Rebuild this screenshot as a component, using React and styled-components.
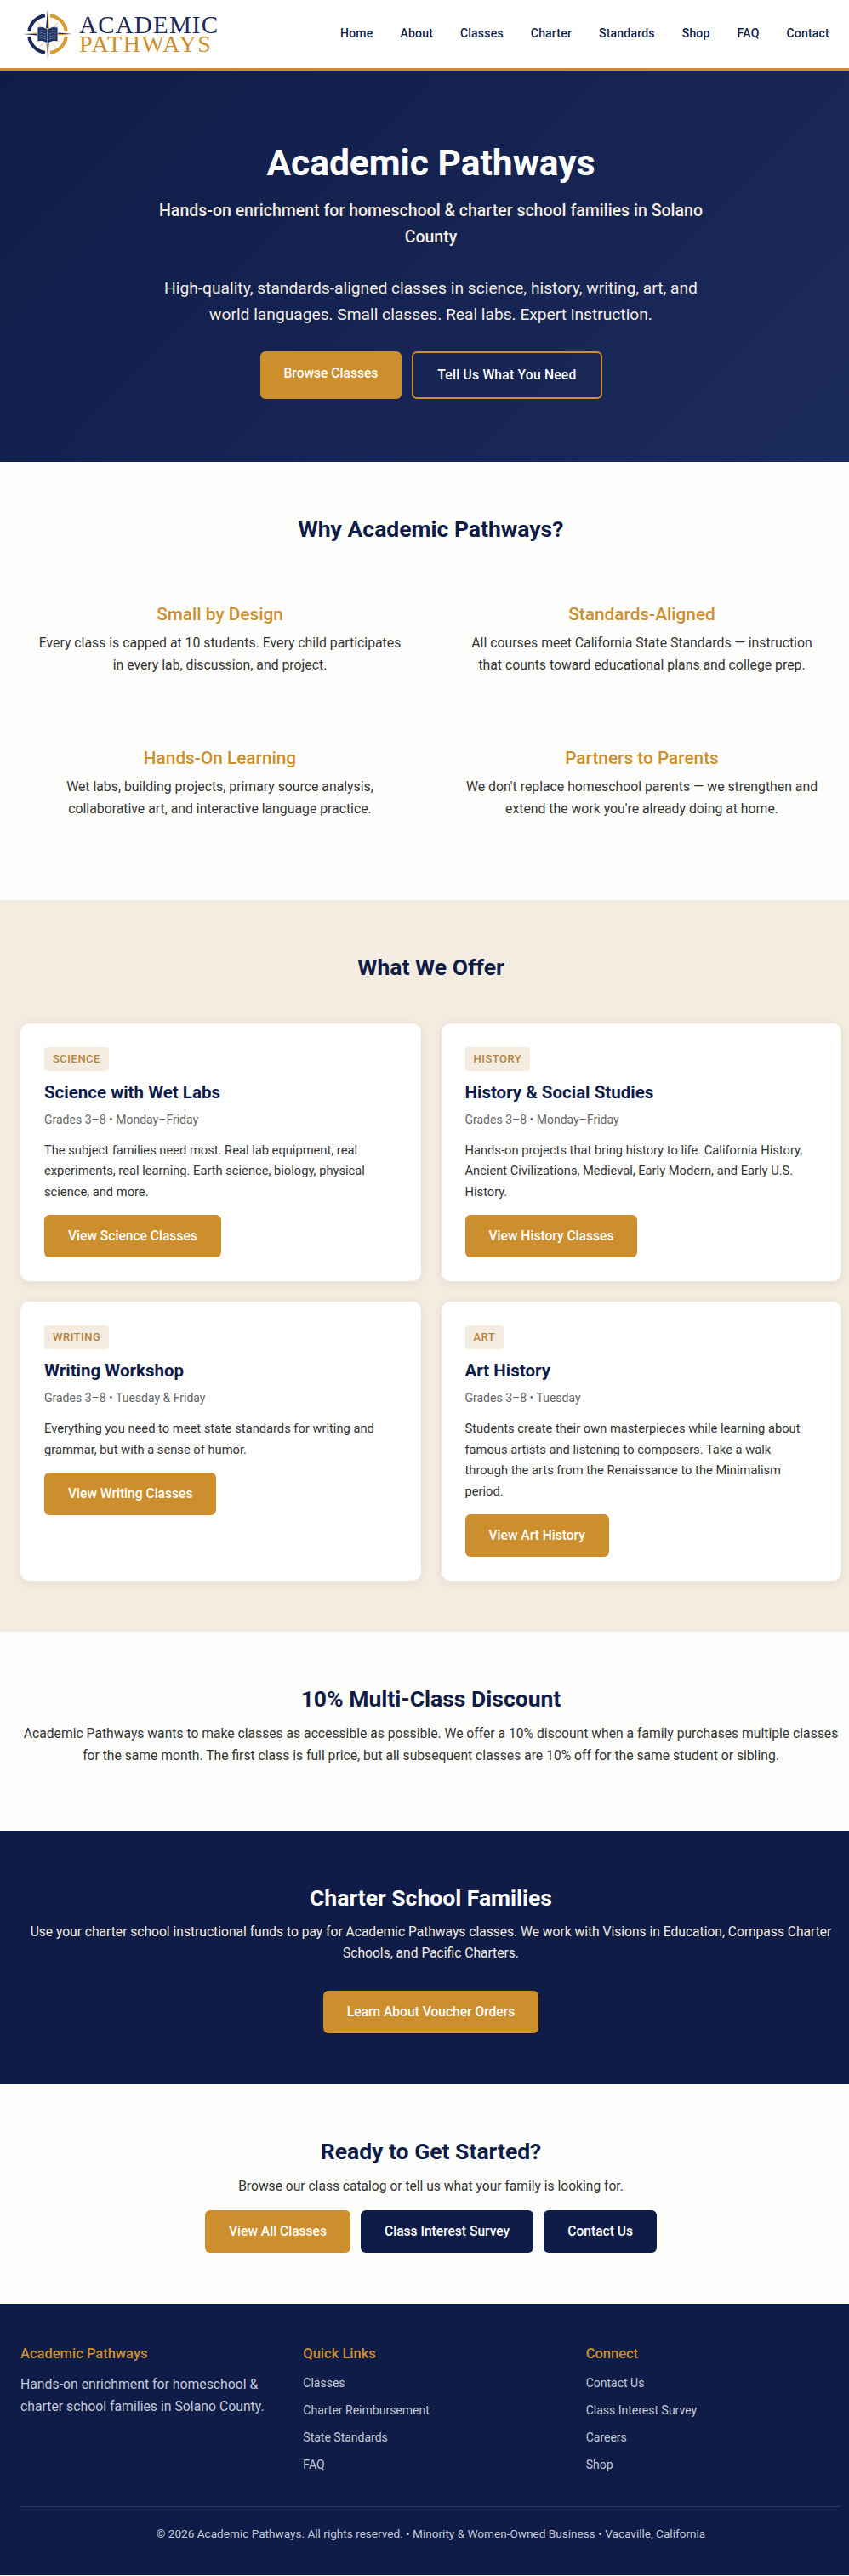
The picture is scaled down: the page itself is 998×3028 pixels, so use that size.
import styled, { createGlobalStyle } from "styled-components";

const navy = "#0f1c47";
const gold = "#cd8f2d";
const cream = "#f4ece0";
const paper = "#fefefc";

const GlobalStyle = createGlobalStyle`
  * {
    box-sizing: border-box;
  }
  html,
  body {
    margin: 0;
    overflow-x: hidden;
  }
  body {
    font-family: Roboto, "Open Sans", Arial, sans-serif;
    font-size: 15.2px;
    line-height: 1.7;
    color: #333;
    background: ${paper};
  }
  h1, h2, h3, h4, p, ul {
    margin: 0;
    padding: 0;
  }
  a {
    text-decoration: none;
    color: inherit;
  }
`;

const Page = styled.div`
  width: 1013px;
`;

const Header = styled.header`
  height: 83px;
  background: #fff;
  border-bottom: 3px solid ${gold};
  padding: 0 24px;
  display: flex;
  align-items: center;
  justify-content: space-between;
`;

const Logo = styled.a`
  display: flex;
  align-items: center;
  gap: 8px;
  margin-left: 3px;
`;

const LogoText = styled.div`
  display: flex;
  flex-direction: column;
  font-family: "Liberation Serif", "Times New Roman", serif;
`;

const LogoLine = styled.span`
  display: block;
  white-space: nowrap;
  font-size: ${({ $gold }) => ($gold ? "28px" : "29px")};
  letter-spacing: ${({ $gold }) => ($gold ? "1.5px" : "1.2px")};
  line-height: ${({ $gold }) => ($gold ? "22px" : "24px")};
  color: ${({ $gold }) => ($gold ? gold : "#1b2a5a")};
`;

const Nav = styled.nav`
  display: flex;
  gap: 4px;
`;

const NavLink = styled.a`
  padding: 6px 14px;
  font-size: 14px;
  font-weight: 500;
  letter-spacing: 0.2px;
  color: ${navy};
`;

const Hero = styled.section`
  background: linear-gradient(135deg, #0f1c47 0%, #1b2b5c 100%);
  padding: 80px 24px 74px;
  text-align: center;
  color: #fff;
`;

const HeroTitle = styled.h1`
  font-size: 42.5px;
  font-weight: 700;
  line-height: 58px;
  margin-bottom: 12px;
`;

const HeroSub = styled.p`
  max-width: 650px;
  margin: 0 auto 30px;
  font-size: 19.5px;
  line-height: 30.6px;
  font-weight: 500;
  color: ${cream};
`;

const HeroText = styled.p`
  max-width: 650px;
  margin: 0 auto 28px;
  font-size: 19.2px;
  line-height: 30.6px;
  color: ${cream};
`;

const ButtonRow = styled.div`
  display: flex;
  justify-content: center;
  gap: 12px;
`;

const Button = styled.a`
  display: inline-block;
  padding: ${({ $big }) => ($big ? "12.8px 28px" : "12px 28px")};
  font-size: 15.6px;
  line-height: 26px;
  font-weight: 500;
  letter-spacing: ${({ $variant }) => ($variant === "outline" ? "0.25px" : "0")};
  color: #fff;
  border-radius: 6px;
  background: ${({ $variant }) =>
    $variant === "navy" ? navy : $variant === "outline" ? "transparent" : gold};
  border: ${({ $variant }) => ($variant === "outline" ? `2px solid ${gold}` : "none")};
`;

const Section = styled.section`
  padding: 60px 24px;
  text-align: ${({ $left }) => ($left ? "left" : "center")};
  background: ${({ $bg }) => $bg || paper};
  color: ${({ $light }) => ($light ? cream : "#333")};
`;

const SectionTitle = styled.h2`
  font-size: 26.5px;
  font-weight: 700;
  line-height: 37px;
  text-align: center;
  color: ${({ $light }) => ($light ? "#fff" : navy)};
  margin-bottom: ${({ $gap }) => $gap || 10}px;
`;

const FeatureGrid = styled.div`
  display: grid;
  grid-template-columns: 1fr 1fr;
  column-gap: 27px;
  row-gap: 18px;
`;

const Feature = styled.div`
  padding: 31px 12px 34px;
  text-align: center;
`;

const FeatureTitle = styled.h3`
  font-size: 20.8px;
  font-weight: 500;
  line-height: 27px;
  color: ${gold};
  margin-bottom: 7px;
`;

const FeatureText = styled.p`
  font-size: 15.8px;
  line-height: 26px;
`;

const CardGrid = styled.div`
  display: grid;
  grid-template-columns: 1fr 1fr;
  gap: 24px;
`;

const Card = styled.article`
  background: #fff;
  border-radius: 10px;
  padding: 28px;
  box-shadow: 0 2px 12px rgba(15, 28, 71, 0.08);
`;

const Tag = styled.span`
  display: block;
  width: fit-content;
  padding: 3px 10px;
  margin-bottom: 12px;
  font-size: 13px;
  line-height: 22px;
  font-weight: 500;
  letter-spacing: 0.5px;
  text-transform: uppercase;
  color: #b5833a;
  background: ${cream};
  border-radius: 4px;
`;

const CardTitle = styled.h3`
  font-size: 20.5px;
  font-weight: 700;
  line-height: 27px;
  color: ${navy};
  margin-bottom: 7px;
`;

const CardMeta = styled.p`
  font-size: 14px;
  line-height: 23px;
  color: #666;
  margin-bottom: 12px;
`;

const CardText = styled.p`
  font-size: 14.7px;
  line-height: 24.5px;
  padding-right: 8px;
  margin-bottom: 15px;
`;

const Lead = styled.p`
  font-size: ${({ $size }) => $size || 15.7}px;
  line-height: ${({ $leading }) => $leading || 26}px;
  margin-bottom: ${({ $gap }) => $gap || 0}px;
`;

const Footer = styled.footer`
  background: ${navy};
  padding: 48px 24px 0;
  height: 319px;
`;

const FooterGrid = styled.div`
  display: grid;
  grid-template-columns: repeat(3, 1fr);
  gap: 32px;
  height: 191px;
  border-bottom: 1px solid rgba(255, 255, 255, 0.12);
`;

const FooterHeading = styled.h4`
  font-size: 16.5px;
  font-weight: 500;
  line-height: 22px;
  color: ${gold};
  margin-bottom: 12px;
`;

const FooterText = styled.p`
  font-size: 15.8px;
  line-height: 26px;
  color: #c4c9d8;
`;

const FooterList = styled.ul`
  list-style: none;
  display: flex;
  flex-direction: column;
  gap: 9px;
`;

const FooterLink = styled.a`
  display: block;
  font-size: 14px;
  line-height: 23px;
  color: #c4c9d8;
`;

const Copyright = styled.p`
  padding-top: 20px;
  text-align: center;
  font-size: 13.6px;
  color: #c4c9d8;
`;

const navItems = ["Home", "About", "Classes", "Charter", "Standards", "Shop", "FAQ", "Contact"];

const features = [
  {
    title: "Small by Design",
    text: "Every class is capped at 10 students. Every child participates in\u00a0every lab, discussion, and project.",
  },
  {
    title: "Standards-Aligned",
    text: "All courses meet California State Standards — instruction that\u00a0counts toward educational plans and college prep.",
  },
  {
    title: "Hands-On Learning",
    text: "Wet labs, building projects, primary source analysis, collaborative art, and interactive language practice.",
  },
  {
    title: "Partners to Parents",
    text: "We don't replace homeschool parents — we strengthen and extend the work you're already doing at home.",
  },
];

const classes = [
  {
    tag: "Science",
    title: "Science with Wet Labs",
    meta: "Grades 3–8 • Monday–Friday",
    text: "The subject families need most. Real lab equipment, real experiments, real learning. Earth science, biology, physical science, and more.",
    cta: "View Science Classes",
  },
  {
    tag: "History",
    title: "History & Social Studies",
    meta: "Grades 3–8 • Monday–Friday",
    text: "Hands-on projects that bring history to life. California History, Ancient Civilizations, Medieval, Early Modern, and Early U.S. History.",
    cta: "View History Classes",
  },
  {
    tag: "Writing",
    title: "Writing Workshop",
    meta: "Grades 3–8 • Tuesday & Friday",
    text: "Everything you need to meet state standards for writing and grammar, but with a sense of humor.",
    cta: "View Writing Classes",
  },
  {
    tag: "Art",
    title: "Art History",
    meta: "Grades 3–8 • Tuesday",
    text: "Students create their own masterpieces while learning about famous artists and listening to composers. Take a walk through the arts from the Renaissance to the Minimalism period.",
    cta: "View Art History",
  },
];

const footerLinks = [
  { title: "Quick Links", links: ["Classes", "Charter Reimbursement", "State Standards", "FAQ"] },
  { title: "Connect", links: ["Contact Us", "Class Interest Survey", "Careers", "Shop"] },
];

const CompassIcon = () => (
  <svg width="58" height="58" viewBox="0 0 58 58" aria-hidden="true">
    <g fill="none" strokeWidth="4">
      <path d="M26 7.2 A22 22 0 0 0 7.2 26" stroke="#1b2a5a" />
      <path d="M7.2 32 A22 22 0 0 0 26 50.8" stroke="#1b2a5a" />
      <path d="M32 7.2 A22 22 0 0 1 50.8 26" stroke="#d99a2f" />
      <path d="M50.8 32 A22 22 0 0 1 32 50.8" stroke="#d99a2f" />
    </g>
    <g stroke="#e8b45c" strokeWidth="0.8">
      <path d="M17 15 L21 20 M41 15 L37 20 M15 38 L20 35 M43 38 L38 35 M20 44 L23 40 M38 44 L35 40" />
    </g>
    <path d="M29 0 L26.6 26.6 L29 29 Z" fill="#1b2a5a" />
    <path d="M29 0 L31.4 26.6 L29 29 Z" fill="#d99a2f" />
    <path d="M29 58 L26.6 31.4 L29 29 Z" fill="#c08a35" />
    <path d="M29 58 L31.4 31.4 L29 29 Z" fill="#1b2a5a" />
    <path d="M0 29 L26.6 26.6 L29 29 Z" fill="#d99a2f" />
    <path d="M0 29 L26.6 31.4 L29 29 Z" fill="#1b2a5a" />
    <path d="M58 29 L31.4 26.6 L29 29 Z" fill="#1b2a5a" />
    <path d="M58 29 L31.4 31.4 L29 29 Z" fill="#d99a2f" />
    <path d="M17 21 Q23 19 29 23 Q35 19 41 21 V38 Q35 36 29 40 Q23 36 17 38 Z" fill="#1f3266" stroke="#fff" strokeWidth="0.8" />
    <path d="M29 23 V40" stroke="#fff" strokeWidth="0.8" />
    <g stroke="#8fa0c4" strokeWidth="0.7">
      <path d="M19.5 25 Q23 24 27 26 M19.5 28 Q23 27 27 29 M19.5 31 Q23 30 27 32 M19.5 34 Q23 33 27 35" />
      <path d="M31 26 Q35 24 38.5 25 M31 29 Q35 27 38.5 28 M31 32 Q35 30 38.5 31 M31 35 Q35 33 38.5 34" />
    </g>
  </svg>
);

const App = () => {
  return (
    <Page>
      <GlobalStyle />
      <Header>
        <Logo href="#">
          <CompassIcon />
          <LogoText>
            <LogoLine>ACADEMIC</LogoLine>
            <LogoLine $gold>PATHWAYS</LogoLine>
          </LogoText>
        </Logo>
        <Nav>
          {navItems.map((item) => (
            <NavLink href="#" key={item}>
              {item}
            </NavLink>
          ))}
        </Nav>
      </Header>

      <Hero>
        <HeroTitle>Academic Pathways</HeroTitle>
        <HeroSub>Hands-on enrichment for homeschool &amp; charter school families in Solano County</HeroSub>
        <HeroText>
          High-quality, standards-aligned classes in science, history, writing, art, and world languages. Small
          classes. Real labs. Expert instruction.
        </HeroText>
        <ButtonRow>
          <Button href="#" $big>
            Browse Classes
          </Button>
          <Button href="#" $big $variant="outline">
            Tell Us What You Need
          </Button>
        </ButtonRow>
      </Hero>

      <Section>
        <SectionTitle $gap={38}>Why Academic Pathways?</SectionTitle>
        <FeatureGrid>
          {features.map((f) => (
            <Feature key={f.title}>
              <FeatureTitle>{f.title}</FeatureTitle>
              <FeatureText>{f.text}</FeatureText>
            </Feature>
          ))}
        </FeatureGrid>
      </Section>

      <Section $bg={cream} $left>
        <SectionTitle $gap={48}>What We Offer</SectionTitle>
        <CardGrid>
          {classes.map((c) => (
            <Card key={c.tag}>
              <Tag>{c.tag}</Tag>
              <CardTitle>{c.title}</CardTitle>
              <CardMeta>{c.meta}</CardMeta>
              <CardText>{c.text}</CardText>
              <Button href="#">{c.cta}</Button>
            </Card>
          ))}
        </CardGrid>
      </Section>

      <Section>
        <SectionTitle>10% Multi-Class Discount</SectionTitle>
        <Lead $gap={15}>
          Academic Pathways wants to make classes as accessible as possible. We offer a 10% discount when a family
          purchases multiple classes for the same month. The first class is full price, but all subsequent classes are
          10% off for the same student or sibling.
        </Lead>
      </Section>

      <Section $bg={navy} $light>
        <SectionTitle $light>Charter School Families</SectionTitle>
        <Lead $gap={31} $leading={25} $size={15.6}>
          Use your charter school instructional funds to pay for Academic Pathways classes. We work with Visions in
          Education, Compass Charter Schools, and Pacific Charters.
        </Lead>
        <Button href="#">Learn About Voucher Orders</Button>
      </Section>

      <Section>
        <SectionTitle>Ready to Get Started?</SectionTitle>
        <Lead $gap={15} $size={15.6}>
          Browse our class catalog or tell us what your family is looking for.
        </Lead>
        <ButtonRow>
          <Button href="#">View All Classes</Button>
          <Button href="#" $variant="navy">
            Class Interest Survey
          </Button>
          <Button href="#" $variant="navy">
            Contact Us
          </Button>
        </ButtonRow>
      </Section>

      <Footer>
        <FooterGrid>
          <div>
            <FooterHeading>Academic Pathways</FooterHeading>
            <FooterText>Hands-on enrichment for homeschool &amp; charter school families in Solano County.</FooterText>
          </div>
          {footerLinks.map((col) => (
            <div key={col.title}>
              <FooterHeading>{col.title}</FooterHeading>
              <FooterList>
                {col.links.map((link) => (
                  <li key={link}>
                    <FooterLink href="#">{link}</FooterLink>
                  </li>
                ))}
              </FooterList>
            </div>
          ))}
        </FooterGrid>
        <Copyright>© 2026 Academic Pathways. All rights reserved. • Minority &amp; Women-Owned Business • Vacaville, California</Copyright>
      </Footer>
    </Page>
  );
};

export default App;
